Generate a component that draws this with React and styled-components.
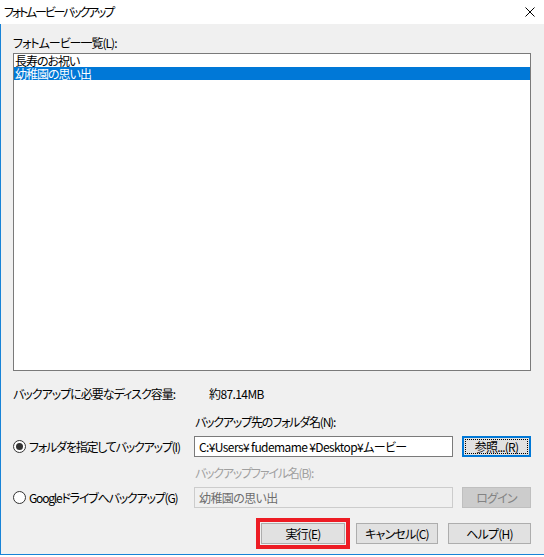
import React from "react";
import styled, { createGlobalStyle } from "styled-components";

const Global = createGlobalStyle`
  html, body { margin: 0; padding: 0; background: #ffffff; }
  body {
    font-family: "Noto Sans CJK JP", "Noto Sans", sans-serif;
    font-size: 12px;
    color: #000;
    font-feature-settings: "palt";
    letter-spacing: -1px;
  }
  * { box-sizing: border-box; }
`;

const Window = styled.div`
  width: 544px;
  height: 557px;
  display: flex;
  flex-direction: column;
  background: #ffffff;
`;

const TitleBar = styled.div`
  height: 24px;
  display: flex;
  align-items: center;
  justify-content: space-between;
  padding: 0 9px 0 4px;
  background: #ffffff;
  font-size: 12px;
  line-height: 14px;
`;

const TitleText = styled.span`
  letter-spacing: -2.2px;
`;

const CloseIcon = styled.svg`
  width: 10px;
  height: 10px;
  display: block;
`;

const Body = styled.div`
  height: 531px;
  display: flex;
  flex-direction: column;
  background: #f0f0f0;
  border-left: 1px solid #1883d7;
  border-bottom: 1px solid #1883d7;
  padding: 12px 13px 0 12px;
`;

const Label = styled.div`
  height: 14px;
  line-height: 14px;
  white-space: nowrap;
  margin-top: ${(p) => p.$mt || 0}px;
  margin-left: ${(p) => p.$ml || 0}px;
  letter-spacing: ${(p) => p.$ls ?? -1}px;
  color: ${(p) => (p.$disabled ? "#a0a0a0" : "#000")};
`;

const ListBox = styled.div`
  margin-top: 3px;
  height: 318px;
  border: 1px solid #7a7a7a;
  background: #ffffff;
  display: flex;
  flex-direction: column;
`;

const ListItem = styled.div`
  height: 13px;
  line-height: 13px;
  padding-left: 1px;
  white-space: nowrap;
  background: ${(p) => (p.$selected ? "#0078d7" : "transparent")};
  color: ${(p) => (p.$selected ? "#ffffff" : "#000")};
`;

const InfoRow = styled.div`
  margin-top: 16px;
  height: 14px;
  line-height: 14px;
  display: flex;
  white-space: nowrap;
`;

const InfoLabel = styled.span`
  width: 196px;
`;

const InfoValue = styled.span`
  letter-spacing: -0.6px;
`;

const FormRow = styled.div`
  display: grid;
  grid-template-columns: 181px 259px 9px 69px;
  align-items: center;
  height: 21px;
  margin-top: ${(p) => p.$mt || 0}px;
`;

const RadioLabel = styled.label`
  display: flex;
  align-items: center;
  gap: 3px;
  white-space: nowrap;
  height: 21px;
  letter-spacing: -1.2px;
`;

const RadioCircle = styled.span`
  width: 13px;
  height: 13px;
  border-radius: 50%;
  border: 1px solid #333333;
  background: #ffffff;
  display: flex;
  align-items: center;
  justify-content: center;
  flex: none;
  &::after {
    content: "";
    width: 7px;
    height: 7px;
    border-radius: 50%;
    background: ${(p) => (p.$checked ? "#333333" : "transparent")};
  }
`;

const TextBox = styled.div`
  grid-column: 2;
  height: 21px;
  line-height: 19px;
  padding-left: 4px;
  white-space: nowrap;
  overflow: hidden;
  letter-spacing: -0.6px;
  border: 1px solid ${(p) => (p.$disabled ? "#cccccc" : "#7a7a7a")};
  background: ${(p) => (p.$disabled ? "#f0f0f0" : "#ffffff")};
  color: ${(p) => (p.$disabled ? "#6d6d6d" : "#000")};
`;

const Button = styled.button`
  font: inherit;
  font-feature-settings: "palt";
  letter-spacing: -0.8px;
  margin: 0;
  padding: 0;
  height: ${(p) => p.$h || 21}px;
  width: ${(p) => p.$w || 69}px;
  grid-column: ${(p) => p.$col || "auto"};
  background: ${(p) => (p.$disabled ? "#cccccc" : "#e1e1e1")};
  border: ${(p) =>
    p.$focused ? "2px solid #0078d7" : p.$disabled ? "1px solid #bfbfbf" : "1px solid #adadad"};
  color: ${(p) => (p.$disabled ? "#838383" : "#000")};
  outline: ${(p) => (p.$focused ? "1px dotted #000" : "none")};
  outline-offset: -4px;
  line-height: 14px;
  white-space: nowrap;
  display: flex;
  align-items: center;
  justify-content: center;
`;

const ButtonRow = styled.div`
  margin-top: 10px;
  display: flex;
  justify-content: flex-end;
  align-items: center;
  gap: 6px;
`;

const RightButtons = styled.div`
  display: flex;
  gap: 10px;
`;

const RedFrame = styled.div`
  border: 4px solid #ed1c24;
  padding: 1px;
  display: flex;
`;

export default function App() {
  return (
    <>
      <Global />
      <Window>
        <TitleBar>
          <TitleText>フォトムービーバックアップ</TitleText>
          <CloseIcon viewBox="0 0 10 10">
            <path d="M0.5 0.5 L9.5 9.5 M9.5 0.5 L0.5 9.5" stroke="#000" strokeWidth="1" fill="none" />
          </CloseIcon>
        </TitleBar>
        <Body>
          <Label>フォトムービー一覧(L):</Label>
          <ListBox>
            <ListItem>長寿のお祝い</ListItem>
            <ListItem $selected>幼稚園の思い出</ListItem>
          </ListBox>
          <InfoRow>
            <InfoLabel>バックアップに必要なディスク容量:</InfoLabel>
            <InfoValue>約87.14MB</InfoValue>
          </InfoRow>
          <Label $mt={14} $ml={182} $ls={-1.2}>バックアップ先のフォルダ名(N):</Label>
          <FormRow $mt={7}>
            <RadioLabel>
              <RadioCircle $checked />
              フォルダを指定してバックアップ(I)
            </RadioLabel>
            <TextBox>C:¥Users¥ fudemame ¥Desktop¥ムービー</TextBox>
            <Button $col={4} $focused>参照...(R)</Button>
          </FormRow>
          <Label $mt={9} $ml={182} $ls={-1.2} $disabled>バックアップファイル名(B):</Label>
          <FormRow $mt={7}>
            <RadioLabel>
              <RadioCircle />
              Googleドライブへバックアップ(G)
            </RadioLabel>
            <TextBox $disabled>幼稚園の思い出</TextBox>
            <Button $col={4} $disabled>ログイン</Button>
          </FormRow>
          <ButtonRow>
            <RedFrame>
              <Button $w={84}>実行(E)</Button>
            </RedFrame>
            <RightButtons>
              <Button $w={82}>キャンセル(C)</Button>
              <Button $w={83}>ヘルプ(H)</Button>
            </RightButtons>
          </ButtonRow>
        </Body>
      </Window>
    </>
  );
}
